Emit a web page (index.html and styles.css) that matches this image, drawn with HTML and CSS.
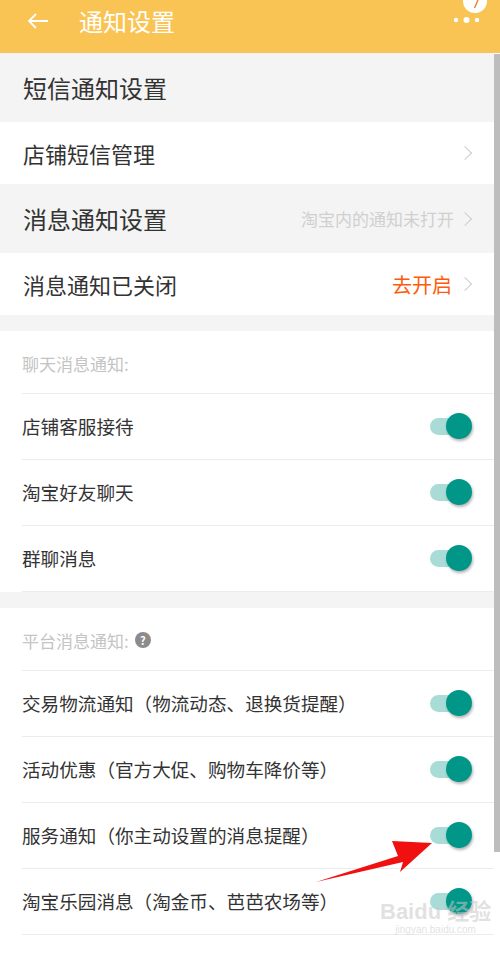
FILE: index.html
```html
<!DOCTYPE html>
<html lang="zh-CN">
<head>
    <meta charset="UTF-8">
    <meta name="viewport" content="width=device-width, initial-scale=1.0">
    <title>通知设置</title>
    <link rel="stylesheet" href="styles.css">
</head>
<body>
    <div class="screen">
        <div class="topbar">
            <svg class="back" width="22" height="16" viewBox="0 0 22 16">
                <path d="M21 8H2M9 1L2 8l7 7" fill="none" stroke="#fff" stroke-width="1.8"/>
            </svg>
            <span class="title">通知设置</span>
            <svg class="more" width="40" height="30" viewBox="0 0 40 30">
                <circle cx="25" cy="1" r="12" fill="#fff"/>
                <path d="M28 0l-3.5 8" stroke="#f07c2b" stroke-width="1.4"/>
                <circle cx="6" cy="20" r="2.2" fill="#fff"/>
                <circle cx="16.5" cy="20" r="3" fill="#fff"/>
                <circle cx="27" cy="20" r="2.2" fill="#fff"/>
            </svg>
        </div>

        <div class="content">
            <div class="section-title">短信通知设置</div>
            <div class="link-row">
                <span>店铺短信管理</span>
                <span class="chev"></span>
            </div>
            <div class="section-title">
                <span>消息通知设置</span>
                <span class="right-info">淘宝内的通知未打开<span class="chev"></span></span>
            </div>
            <div class="link-row">
                <span>消息通知已关闭</span>
                <span class="right-action">去开启<span class="chev"></span></span>
            </div>

            <div class="gap"></div>

            <div class="group">
                <div class="group-label">聊天消息通知:</div>
                <div class="switch-row"><span>店铺客服接待</span><span class="toggle"></span></div>
                <div class="switch-row"><span>淘宝好友聊天</span><span class="toggle"></span></div>
                <div class="switch-row"><span>群聊消息</span><span class="toggle"></span></div>
            </div>

            <div class="gap"></div>

            <div class="group last">
                <div class="group-label">平台消息通知: <span class="help">?</span></div>
                <div class="switch-row"><span>交易物流通知（物流动态、退换货提醒）</span><span class="toggle"></span></div>
                <div class="switch-row"><span>活动优惠（官方大促、购物车降价等）</span><span class="toggle"></span></div>
                <div class="switch-row"><span>服务通知（你主动设置的消息提醒）</span><span class="toggle"></span></div>
                <div class="switch-row"><span>淘宝乐园消息（淘金币、芭芭农场等）</span><span class="toggle"></span></div>
            </div>
        </div>

        <div class="scrollbar"></div>

        <svg class="pointer" width="140" height="60" viewBox="0 0 140 60">
            <polygon points="132,13 92,11 98,26 16,52 103,32 100,42" fill="#f01010"/>
        </svg>

        <div class="watermark">
            <span class="wm-logo">Bai<b>du</b> 经验</span>
            <span class="wm-url">jingyan.baidu.com</span>
        </div>
    </div>
</body>
</html>
```

FILE: styles.css
```css
:root {
    --bar-color: #f9c453;
    --text-color: #333;
    --muted: #c4c4c4;
    --line: #ececec;
    --teal: #009688;
}

body {
    margin: 0;
    font-family: "Noto Sans CJK SC", "Noto Sans", sans-serif;
    color: var(--text-color);
    background-color: #f4f4f4;
}

.screen {
    position: relative;
    width: 500px;
    height: 954px;
    overflow: hidden;
    background-color: white;
}

.topbar {
    height: 53px;
    background-color: var(--bar-color);
    display: flex;
    align-items: center;
    color: white;
}

.back {
    margin-left: 27px;
    margin-top: -12px;
}

.title {
    margin-left: 30px;
    margin-top: -12px;
    font-size: 24px;
    line-height: 1;
}

.more {
    position: absolute;
    left: 450px;
    top: 0;
}

.content {
    padding-right: 6px;
}

.section-title {
    height: 69px;
    display: flex;
    align-items: center;
    justify-content: space-between;
    padding: 0 24px 0 23px;
    font-size: 24px;
    background-color: #f4f4f4;
}

.link-row {
    height: 62px;
    display: flex;
    align-items: center;
    justify-content: space-between;
    padding: 0 24px 0 23px;
    font-size: 22px;
    background-color: white;
}

.chev {
    display: inline-block;
    width: 9px;
    height: 9px;
    border-top: 1.5px solid #c9cfc9;
    border-right: 1.5px solid #c9cfc9;
    transform: rotate(45deg);
    margin-left: 6px;
}

.right-info {
    display: flex;
    align-items: center;
    font-size: 17px;
    color: #d0d0d0;
}

.right-action {
    display: flex;
    align-items: center;
    font-size: 20px;
    color: #ff5a0a;
}

.right-action .chev {
    margin-left: 8px;
}

.gap {
    height: 16px;
    background-color: #f4f4f4;
}

.group {
    background-color: white;
    padding-left: 22px;
}

.group-label {
    height: 60px;
    display: flex;
    align-items: center;
    padding-top: 2px;
    font-size: 17px;
    color: var(--muted);
    border-bottom: 1px solid var(--line);
}

.help {
    display: inline-flex;
    align-items: center;
    justify-content: center;
    width: 16px;
    height: 16px;
    margin-left: 6px;
    border-radius: 50%;
    background-color: #8c8c8c;
    color: white;
    font-size: 11px;
    font-weight: bold;
}

.switch-row {
    display: flex;
    align-items: center;
    justify-content: space-between;
    padding-right: 24px;
    padding-bottom: 3px;
    box-sizing: border-box;
    height: 66px;
    font-size: 18.6px;
    border-bottom: 1px solid var(--line);
}

.switch-row .toggle {
    margin-top: 3px;
}

.toggle {
    position: relative;
    width: 40px;
    height: 17px;
    border-radius: 9px;
    background-color: #a9dcd6;
}

.toggle::after {
    content: "";
    position: absolute;
    right: -2px;
    top: -5px;
    width: 26px;
    height: 26px;
    border-radius: 50%;
    background-color: var(--teal);
    box-shadow: 1px 2px 3px rgba(0, 0, 0, 0.3);
}

.scrollbar {
    position: absolute;
    right: 0;
    top: 54px;
    width: 6px;
    height: 798px;
    background-color: #bdbdbd;
}

.pointer {
    position: absolute;
    left: 300px;
    top: 830px;
}

.watermark {
    position: absolute;
    left: 380px;
    top: 900px;
    display: flex;
    flex-direction: column;
    align-items: center;
    color: rgba(200, 200, 200, 0.55);
    font-family: "Liberation Sans", "Noto Sans CJK SC", sans-serif;
}

.wm-logo {
    font-size: 22px;
    font-weight: bold;
    line-height: 1.1;
}

.wm-url {
    font-size: 10px;
}
```
